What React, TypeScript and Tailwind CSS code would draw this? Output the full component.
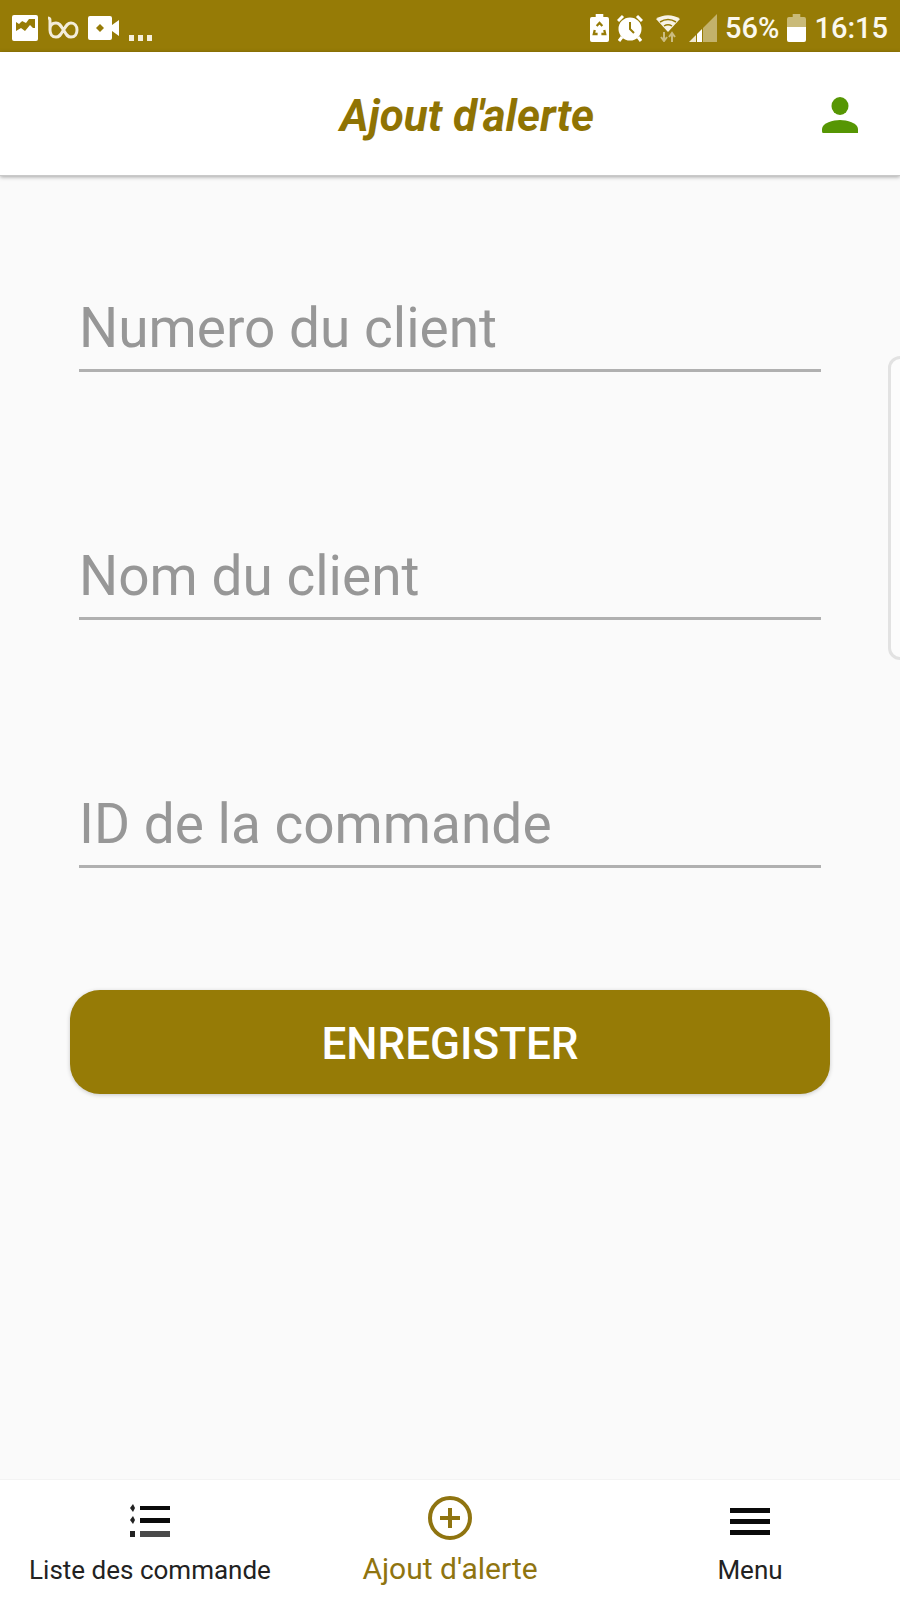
import type { ReactNode } from "react";

function PictureIcon() {
  return (
    <svg className="size-[26px]" viewBox="0 0 26 26" aria-hidden="true">
      <path
        fill="#fff"
        fillRule="evenodd"
        d="M2 0h22a2 2 0 0 1 2 2v22a2 2 0 0 1-2 2H2a2 2 0 0 1-2-2V2a2 2 0 0 1 2-2Zm2 4v12l5-3 4 3 5-6 3 3h2V4h-6l-3 4-4-2-3 3-3-2V4Z"
      />
      <circle cx="8" cy="5" r="2" fill="#fff" />
    </svg>
  );
}

function LoopIcon() {
  return (
    <svg className="h-[26px] w-[32px]" viewBox="0 0 32 26" fill="none" stroke="#f3eddb" strokeWidth="3" aria-hidden="true">
      <path d="M1 3c2 0 2 1 2 4v8c0 4 2 7 6 7s5-3 7.500-7 4-7 7.500-7 6 3 6 7-2 7-6 7-5-3-7.500-7-4-7-7.500-7-6 2-6 6" />
    </svg>
  );
}

function CameraIcon() {
  return (
    <svg className="h-[24px] w-[32px]" viewBox="0 0 32 24" aria-hidden="true">
      <path
        fill="#fff"
        fillRule="evenodd"
        d="M2 0h20a2 2 0 0 1 2 2v7l7-5v16l-7-5v7a2 2 0 0 1-2 2H2a2 2 0 0 1-2-2V2a2 2 0 0 1 2-2Zm10 8-4 4 4 4 4-4Z"
      />
    </svg>
  );
}

function DotsIcon() {
  return (
    <svg className="h-[26px] w-[24px]" viewBox="0 0 24 26" fill="#f5efdc" aria-hidden="true">
      <path d="M0 20h5v6H0zM9 20h5v6H9zM18 20h5v6h-5z" />
    </svg>
  );
}

function BatterySaverIcon() {
  return (
    <svg className="h-[28px] w-[19px]" viewBox="0 0 20 28" preserveAspectRatio="none" aria-hidden="true">
      <path fill="#fff" d="M6 0h8v3h4a2 2 0 0 1 2 2v21a2 2 0 0 1-2 2H2a2 2 0 0 1-2-2V5a2 2 0 0 1 2-2h4Z" />
      <path d="m7 12 3-3 3 3M5 16l-1 4h4m4 0h4l-1-4" fill="none" stroke="#967b06" strokeWidth="2.4" />
    </svg>
  );
}

function AlarmIcon() {
  return (
    <svg className="h-[28px] w-[26px]" viewBox="0 0 26 28" aria-hidden="true">
      <path d="m1 7 5-5m14 0 5 5M5 23l-3 4m19-4 3 4" stroke="#fff" strokeWidth="3" />
      <circle cx="13" cy="15" r="11.500" fill="#fff" />
      <path d="M13 8v7l4 4" fill="none" stroke="#967b06" strokeWidth="2" />
    </svg>
  );
}

function WifiIcon() {
  return (
    <svg className="h-[28px] w-[26px]" viewBox="0 0 26 28" aria-hidden="true">
      <path d="M1 5c7-5 17-5 24 0L13 18Z" fill="#f7f3e6" />
      <path d="M5 8c5-3 11-3 16 0M9 12c3-2 5-2 8 0" fill="none" stroke="#967b06" strokeWidth="1.500" />
      <path d="M9 18v9m-3-4 3 4 3-4M17 28v-9m-3 4 3-4 3 4" fill="none" stroke="#cbbc80" strokeWidth="2" />
    </svg>
  );
}

function SignalIcon() {
  return (
    <svg className="h-[28px] w-[28px]" viewBox="0 0 28 28" aria-hidden="true">
      <path d="M28 0v28H14V14Z" fill="#c3b26b" />
      <path d="M7 21v7H0Z" fill="#efe8cf" />
      <path d="M8 20l5-5v13H8Z" fill="#fff" />
    </svg>
  );
}

function BatteryIcon() {
  return (
    <svg className="h-[28px] w-[19px]" viewBox="0 0 20 28" preserveAspectRatio="none" aria-hidden="true">
      <path d="M6 0h8v3h4a2 2 0 0 1 2 2v8H0V5a2 2 0 0 1 2-2h4Z" fill="#c9ba78" />
      <path d="M0 13h20v13a2 2 0 0 1-2 2H2a2 2 0 0 1-2-2Z" fill="#fff" />
    </svg>
  );
}

function StatusBar() {
  return (
    <div className="flex h-[52px] items-center justify-between bg-[#967b06] px-3 pt-1 text-[29px] leading-none font-medium text-[#fbf8ee]">
      <div className="flex items-center gap-[9px]">
        <PictureIcon />
        <LoopIcon />
        <CameraIcon />
        <DotsIcon />
      </div>
      <div className="flex items-center gap-2">
        <BatterySaverIcon />
        <AlarmIcon />
        <span className="pl-1">
          <WifiIcon />
        </span>
        <SignalIcon />
        <span>56%</span>
        <BatteryIcon />
        <time>16:15</time>
      </div>
    </div>
  );
}

function Field({ id, label }: { id: string; label: string }) {
  return (
    <input
      id={id}
      type="text"
      aria-label={label}
      placeholder={label}
      className="h-[80px] w-full border-b-[3px] border-[#b0b0b0] bg-transparent pb-1 text-[55px] text-[#333] outline-none placeholder:text-[#979797]"
    />
  );
}

function Tab({ label, active, icon }: { label: string; active?: boolean; icon: ReactNode }) {
  return (
    <a
      href="#"
      aria-current={active ? "page" : undefined}
      className={
        active
          ? "flex flex-1 flex-col items-center pt-4 text-[30px] leading-[38px] text-[#8f7410]"
          : "flex flex-1 flex-col items-center pt-4 text-[26px] leading-[40px] text-[#222]"
      }
    >
      <span className="flex h-[54px] items-start">{icon}</span>
      <span className="whitespace-nowrap">{label}</span>
    </a>
  );
}

export default function App() {
  return (
    <div className="relative flex min-h-screen flex-col overflow-hidden bg-[#fafafa] font-['Roboto',sans-serif]">
      <StatusBar />
      <header className="grid h-[124px] grid-cols-[1fr_auto_1fr] items-center border-b border-[#c9c9c9] bg-white pt-1 pr-[42px] pl-[76px] shadow-[0_1px_4px_rgba(0,0,0,0.35)]">
        <h1 className="col-start-2 text-[44px] leading-none font-bold text-[#8f7303] italic">Ajout d'alerte</h1>
        <button type="button" aria-label="Profil" className="justify-self-end">
          <svg className="h-[37px] w-[36px]" viewBox="0 0 38 37" preserveAspectRatio="none" fill="#569603" aria-hidden="true">
            <circle cx="19" cy="9" r="9" />
            <path d="M1 36q-1 0-1-2v-2c0-6 12-9 19-9s19 3 19 9v4Z" />
          </svg>
        </button>
      </header>

      <main className="flex-1 px-[70px] pt-[116px]">
        <form onSubmit={(event) => event.preventDefault()}>
          <div className="flex flex-col gap-[168px] px-[9px]">
            <Field id="numero" label="Numero du client" />
            <Field id="nom" label="Nom du client" />
            <Field id="commande" label="ID de la commande" />
          </div>
          <button
            type="submit"
            className="mt-[122px] h-[104px] w-full rounded-[30px] bg-[#967b06] pt-1 text-[44px] font-medium text-white shadow-[0_1px_4px_rgba(0,0,0,0.2)]"
          >
            ENREGISTER
          </button>
        </form>
      </main>

      <div className="absolute top-[356px] -right-3 h-[304px] w-[24px] rounded-[12px] border-[3px] border-[#e2e2e2] bg-[#fcfcfc]" />

      <nav className="flex h-[121px] border-t border-[#f3f3f3] bg-white">
        <Tab
          label="Liste des commande"
          icon={
            <svg className="h-[54px] w-[42px]" viewBox="0 0 42 54" aria-hidden="true">
              <path d="M11 10h30v4H11zM11 22h30v5H11z" fill="#0a0a0a" />
              <path d="M11 35h30v6H11z" fill="#4a4a4a" />
              <path d="M1 12l3-4 2 4-2 4zM1 24l3-4 2 4-2 4zM1 35h5v6H1z" fill="#222" />
            </svg>
          }
        />
        <Tab
          active
          label="Ajout d'alerte"
          icon={
            <svg className="size-[44px]" viewBox="0 0 44 44" fill="none" stroke="#8f7410" strokeWidth="4" aria-hidden="true">
              <circle cx="22" cy="22" r="20" />
              <path d="M22 12v20M12 22h20" />
            </svg>
          }
        />
        <Tab
          label="Menu"
          icon={
            <svg className="h-[54px] w-[40px]" viewBox="0 0 40 54" fill="#0a0a0a" aria-hidden="true">
              <path d="M0 12h40v5H0zM0 23h40v5H0zM0 34h40v5H0z" />
            </svg>
          }
        />
      </nav>
    </div>
  );
}
